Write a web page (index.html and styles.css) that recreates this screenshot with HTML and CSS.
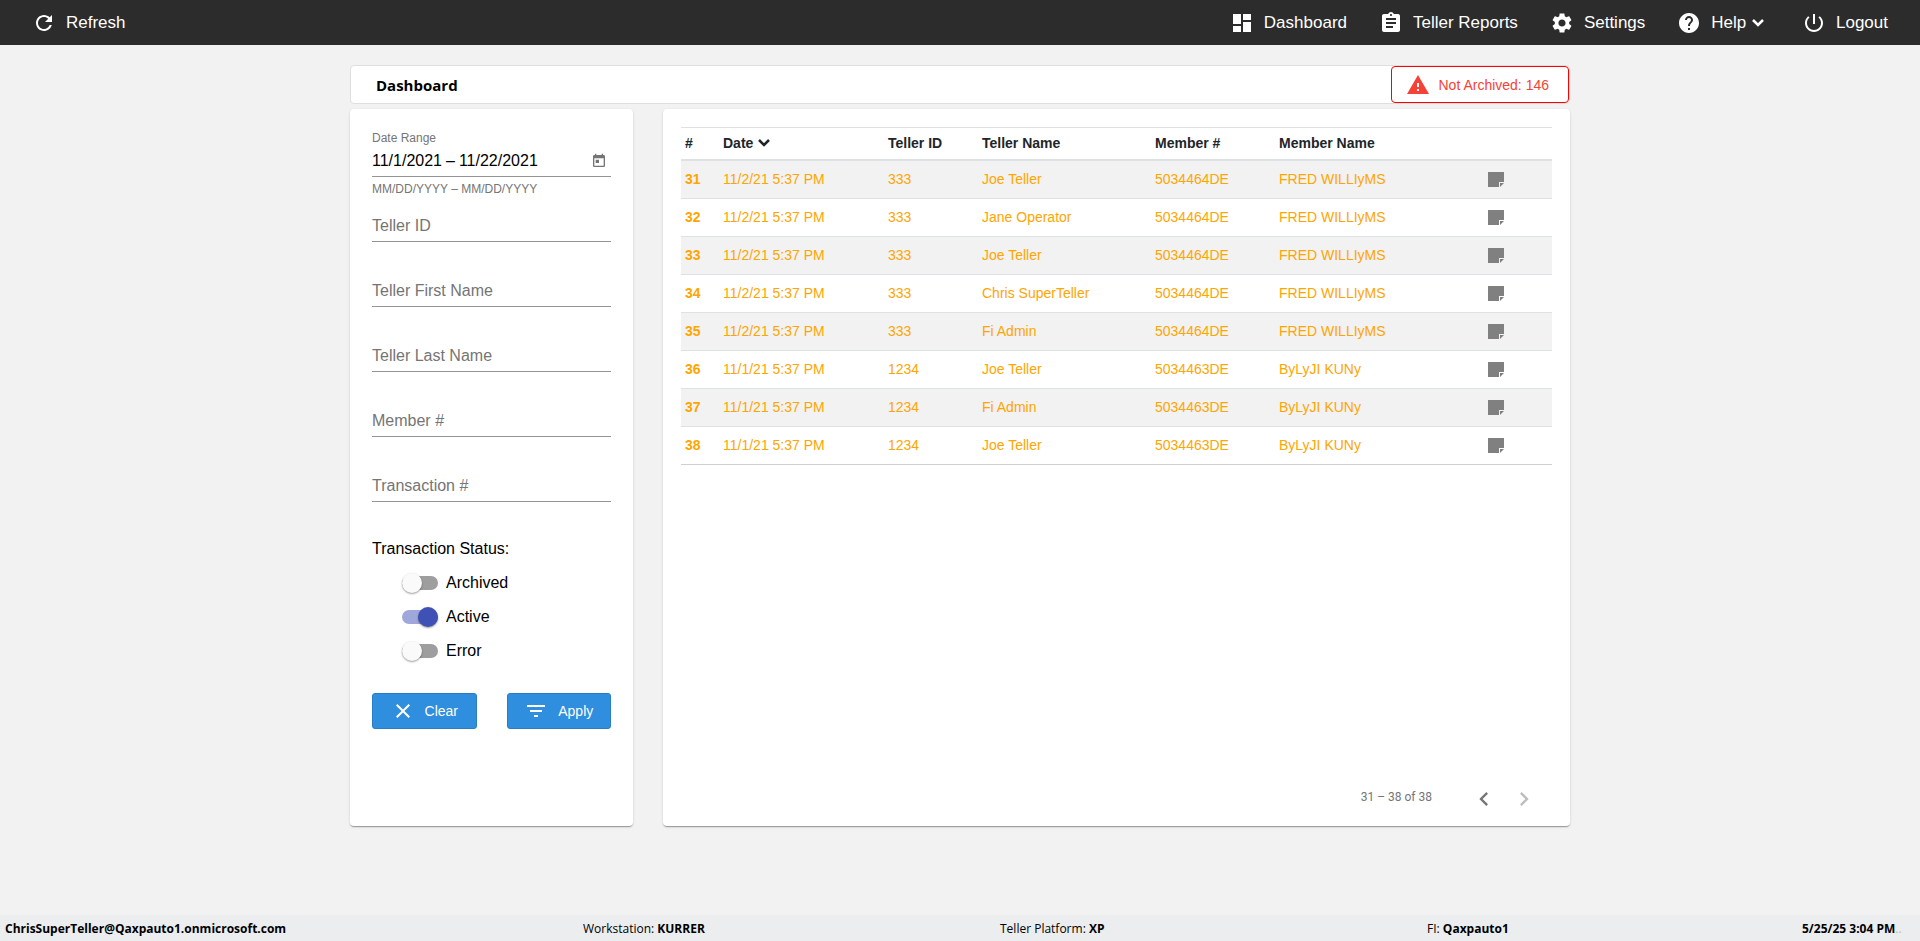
FILE: index.html
```
<!DOCTYPE html>
<html lang="en">
<head>
    <meta charset="UTF-8">
    <meta name="viewport" content="width=device-width, initial-scale=1.0">
    <title>Dashboard</title>
    <link rel="stylesheet" href="styles.css">
</head>
<body>
    <svg class="sprite" aria-hidden="true">
        <symbol id="note" viewBox="0 0 18 18">
            <path d="M1 1h16v10h-5v5H1z"/>
            <path d="M13 12h4l-4 4z"/>
        </symbol>
    </svg>

    <header class="navbar">
        <a href="#" class="nav-item">
            <svg class="icon" viewBox="0 0 24 24"><path d="M17.65 6.35C16.2 4.9 14.21 4 12 4c-4.42 0-7.99 3.58-7.99 8s3.57 8 7.99 8c3.73 0 6.84-2.55 7.73-6h-2.08c-.82 2.33-3.04 4-5.65 4-3.31 0-6-2.69-6-6s2.69-6 6-6c1.66 0 3.14.69 4.22 1.78L13 11h7V4l-2.35 2.35z"/></svg>
            Refresh
        </a>
        <nav class="nav-links">
            <a href="#" class="nav-item">
                <svg class="icon" viewBox="0 0 24 24"><path d="M3 13h8V3H3v10zm0 8h8v-6H3v6zm10 0h8V11h-8v10zm0-18v6h8V3h-8z"/></svg>
                Dashboard
            </a>
            <a href="#" class="nav-item">
                <svg class="icon" viewBox="0 0 24 24"><path d="M19 3h-4.18C14.4 1.84 13.3 1 12 1c-1.3 0-2.4.84-2.82 2H5c-1.1 0-2 .9-2 2v14c0 1.1.9 2 2 2h14c1.1 0 2-.9 2-2V5c0-1.1-.9-2-2-2zm-7 0c.55 0 1 .45 1 1s-.45 1-1 1-1-.45-1-1 .45-1 1-1zm2 14H7v-2h7v2zm3-4H7v-2h10v2zm0-4H7V7h10v2z"/></svg>
                Teller Reports
            </a>
            <a href="#" class="nav-item">
                <svg class="icon" viewBox="0 0 24 24"><path d="M19.14 12.94c.04-.3.06-.61.06-.94 0-.32-.02-.64-.07-.94l2.03-1.58c.18-.14.23-.41.12-.61l-1.92-3.32c-.12-.22-.37-.29-.59-.22l-2.39.96c-.5-.38-1.03-.7-1.62-.94l-.36-2.54c-.04-.24-.24-.41-.48-.41h-3.84c-.24 0-.43.17-.47.41l-.36 2.54c-.59.24-1.13.57-1.62.94l-2.39-.96c-.22-.08-.47 0-.59.22L2.74 8.87c-.12.21-.08.47.12.61l2.03 1.58c-.05.3-.09.63-.09.94s.02.64.07.94l-2.03 1.58c-.18.14-.23.41-.12.61l1.92 3.32c.12.22.37.29.59.22l2.39-.96c.5.38 1.03.7 1.62.94l.36 2.54c.05.24.24.41.48.41h3.84c.24 0 .44-.17.47-.41l.36-2.54c.59-.24 1.13-.56 1.62-.94l2.39.96c.22.08.47 0 .59-.22l1.92-3.32c.12-.22.07-.47-.12-.61l-2.01-1.58zM12 15.6c-1.98 0-3.6-1.62-3.6-3.6s1.62-3.6 3.6-3.6 3.6 1.62 3.6 3.6-1.62 3.6-3.6 3.6z"/></svg>
                Settings
            </a>
            <a href="#" class="nav-item">
                <svg class="icon" viewBox="0 0 24 24"><path d="M12 2C6.48 2 2 6.48 2 12s4.48 10 10 10 10-4.48 10-10S17.52 2 12 2zm1 17h-2v-2h2v2zm2.07-7.75l-.9.92C13.45 12.9 13 13.5 13 15h-2v-.5c0-1.1.45-2.1 1.17-2.83l1.24-1.26c.37-.36.59-.86.59-1.41 0-1.1-.9-2-2-2s-2 .9-2 2H8c0-2.21 1.79-4 4-4s4 1.79 4 4c0 .88-.36 1.68-.93 2.25z"/></svg>
                <span class="nav-menu">Help <svg class="caret" viewBox="0 0 14 10"><path d="M2 2l5 5 5-5"/></svg></span>
            </a>
            <a href="#" class="nav-item">
                <svg class="icon" viewBox="0 0 24 24"><path d="M13 3h-2v10h2V3zm4.83 2.17l-1.42 1.42C17.99 7.86 19 9.81 19 12c0 3.87-3.13 7-7 7s-7-3.13-7-7c0-2.19 1.01-4.14 2.58-5.42L6.17 5.17C4.23 6.82 3 9.26 3 12c0 4.97 4.03 9 9 9s9-4.03 9-9c0-2.74-1.23-5.18-3.17-6.83z"/></svg>
                Logout
            </a>
        </nav>
    </header>

    <main class="page">
        <div class="title-bar">
            <h1>Dashboard</h1>
            <button type="button" class="alert-button">
                <svg class="icon" viewBox="0 0 24 24"><path d="M1 21h22L12 2 1 21zm12-3h-2v-2h2v2zm0-4h-2v-4h2v4z"/></svg>
                Not Archived: 146
            </button>
        </div>

        <div class="content">
            <form class="card filters">
                <div class="date-field">
                    <label for="startDate">Date Range</label>
                    <div class="date-row">
                        <input type="text" id="startDate" class="start-date" value="11/1/2021">
                        <span>–</span>
                        <input type="text" class="end-date" aria-label="End date" value="11/22/2021">
                        <button type="button" class="calendar-button" aria-label="Open calendar">
                            <svg viewBox="0 0 24 24"><path d="M19 3h-1V1h-2v2H8V1H6v2H5c-1.11 0-1.99.9-1.99 2L3 19c0 1.1.89 2 2 2h14c1.1 0 2-.9 2-2V5c0-1.1-.9-2-2-2zm0 16H5V8h14v11zM7 10h5v5H7z"/></svg>
                        </button>
                    </div>
                    <p class="hint">MM/DD/YYYY – MM/DD/YYYY</p>
                </div>
                <div class="field">
                    <label for="tellerId">Teller ID</label>
                    <input type="text" id="tellerId">
                </div>
                <div class="field">
                    <label for="tellerFirstName">Teller First Name</label>
                    <input type="text" id="tellerFirstName">
                </div>
                <div class="field">
                    <label for="tellerLastName">Teller Last Name</label>
                    <input type="text" id="tellerLastName">
                </div>
                <div class="field">
                    <label for="memberNumber">Member #</label>
                    <input type="text" id="memberNumber">
                </div>
                <div class="field">
                    <label for="transactionNumber">Transaction #</label>
                    <input type="text" id="transactionNumber">
                </div>

                <fieldset class="status">
                    <legend>Transaction Status:</legend>
                    <label class="toggle"><input type="checkbox"> Archived</label>
                    <label class="toggle"><input type="checkbox" checked> Active</label>
                    <label class="toggle"><input type="checkbox"> Error</label>
                </fieldset>

                <div class="buttons">
                    <button type="button" class="btn">
                        <svg class="icon" viewBox="0 0 24 24"><path d="M19 6.41L17.59 5 12 10.59 6.41 5 5 6.41 10.59 12 5 17.59 6.41 19 12 13.41 17.59 19 19 17.59 13.41 12z"/></svg>
                        Clear
                    </button>
                    <button type="button" class="btn">
                        <svg class="icon" viewBox="0 0 24 24"><path d="M10 18h4v-2h-4v2zM3 6v2h18V6H3zm3 7h12v-2H6v2z"/></svg>
                        Apply
                    </button>
                </div>
            </form>

            <section class="card results">
                <table class="transactions">
                    <thead>
                        <tr>
                            <th class="col-number">#</th>
                            <th class="col-date">Date <svg class="caret" viewBox="0 0 14 10"><path d="M2 2l5 5 5-5"/></svg></th>
                            <th class="col-teller-id">Teller ID</th>
                            <th class="col-teller-name">Teller Name</th>
                            <th class="col-member">Member #</th>
                            <th>Member Name</th>
                            <th class="col-note"></th>
                        </tr>
                    </thead>
                    <tbody>
                        <tr><th>31</th><td>11/2/21 5:37 PM</td><td>333</td><td>Joe Teller</td><td>5034464DE</td><td>FRED WILLIyMS</td><td><svg class="note"><use href="#note"/></svg></td></tr>
                        <tr><th>32</th><td>11/2/21 5:37 PM</td><td>333</td><td>Jane Operator</td><td>5034464DE</td><td>FRED WILLIyMS</td><td><svg class="note"><use href="#note"/></svg></td></tr>
                        <tr><th>33</th><td>11/2/21 5:37 PM</td><td>333</td><td>Joe Teller</td><td>5034464DE</td><td>FRED WILLIyMS</td><td><svg class="note"><use href="#note"/></svg></td></tr>
                        <tr><th>34</th><td>11/2/21 5:37 PM</td><td>333</td><td>Chris SuperTeller</td><td>5034464DE</td><td>FRED WILLIyMS</td><td><svg class="note"><use href="#note"/></svg></td></tr>
                        <tr><th>35</th><td>11/2/21 5:37 PM</td><td>333</td><td>Fi Admin</td><td>5034464DE</td><td>FRED WILLIyMS</td><td><svg class="note"><use href="#note"/></svg></td></tr>
                        <tr><th>36</th><td>11/1/21 5:37 PM</td><td>1234</td><td>Joe Teller</td><td>5034463DE</td><td>ByLyJI KUNy</td><td><svg class="note"><use href="#note"/></svg></td></tr>
                        <tr><th>37</th><td>11/1/21 5:37 PM</td><td>1234</td><td>Fi Admin</td><td>5034463DE</td><td>ByLyJI KUNy</td><td><svg class="note"><use href="#note"/></svg></td></tr>
                        <tr><th>38</th><td>11/1/21 5:37 PM</td><td>1234</td><td>Joe Teller</td><td>5034463DE</td><td>ByLyJI KUNy</td><td><svg class="note"><use href="#note"/></svg></td></tr>
                    </tbody>
                </table>
                <div class="paginator">
                    <span class="range">31 – 38 of 38</span>
                    <button type="button" class="page-button" aria-label="Previous page">
                        <svg viewBox="0 0 24 24"><path d="M15.41 7.41L14 6l-6 6 6 6 1.41-1.41L10.83 12z"/></svg>
                    </button>
                    <button type="button" class="page-button" aria-label="Next page" disabled>
                        <svg viewBox="0 0 24 24"><path d="M10 6L8.59 7.41 13.17 12l-4.58 4.59L10 18l6-6z"/></svg>
                    </button>
                </div>
            </section>
        </div>
    </main>

    <footer class="footer">
        <div><b>ChrisSuperTeller@Qaxpauto1.onmicrosoft.com</b></div>
        <div>Workstation: <b>KURRER</b></div>
        <div>Teller Platform: <b>XP</b></div>
        <div>FI: <b>Qaxpauto1</b></div>
        <div><b>5/25/25 3:04 PM</b><span class="dots">..</span></div>
    </footer>
</body>
</html>
```
FILE: styles.css
```
* {
    box-sizing: border-box;
}
body {
    font-family: Arial, "Liberation Sans", sans-serif;
    font-size: 16px;
    background-color: #f2f2f2;
    color: #000;
    margin: 0;
    min-height: 100vh;
    display: flex;
    flex-direction: column;
}
button, input {
    font: inherit;
}
.sprite {
    display: none;
}
.icon {
    width: 24px;
    height: 24px;
    fill: currentColor;
    flex: none;
}
.caret {
    width: 14px;
    height: 10px;
    fill: none;
    stroke: currentColor;
    stroke-width: 2.5;
}

/* top bar */
.navbar {
    background-color: #2c2c2c;
    height: 45px;
    padding: 0 32px;
    display: flex;
    justify-content: space-between;
    align-items: center;
}
.nav-links {
    display: flex;
    gap: 32px;
}
.nav-item {
    display: flex;
    align-items: center;
    gap: 10px;
    color: #fff;
    font-size: 17px;
    line-height: 24px;
    text-decoration: none;
}
.nav-menu {
    padding-right: 5px;
}

/* page */
.page {
    flex: 1;
    width: 100%;
    max-width: 1220px;
    margin: 0 auto;
    padding: 20px 0 89px;
    display: flex;
    flex-direction: column;
}
.title-bar {
    background-color: #fff;
    border: 1px solid #dedede;
    border-radius: 4px;
    padding-left: 25px;
    margin-bottom: 5px;
    display: flex;
    justify-content: space-between;
    align-items: center;
}
.title-bar h1 {
    font-family: "Segoe UI", "Open Sans", sans-serif;
    font-size: 15px;
    margin: 0;
}
.alert-button {
    display: flex;
    align-items: center;
    gap: 8px;
    height: 37px;
    padding: 0 19px 0 14px;
    background-color: #fff;
    border: 1px solid #f00;
    border-radius: 4px;
    color: #f44336;
    font-size: 14px;
}
.content {
    flex: 1;
    display: grid;
    grid-template-columns: 283px 1fr;
    gap: 30px;
}
.card {
    background-color: #fff;
    border-radius: 4px;
    box-shadow: 0 2px 1px -1px rgba(0, 0, 0, 0.2), 0 1px 1px rgba(0, 0, 0, 0.14), 0 1px 3px rgba(0, 0, 0, 0.12);
}

/* filters */
.filters {
    padding: 22px;
}
.filters input[type=text] {
    border: none;
    outline: none;
    background: transparent;
    padding: 0;
    min-width: 0;
}
.date-field {
    height: 80px;
}
.date-field label {
    display: block;
    font-size: 12px;
    line-height: 14px;
    color: #757575;
}
.date-row {
    display: flex;
    align-items: center;
    gap: 4px;
    height: 32px;
    padding-right: 4px;
    border-bottom: 1px solid #949494;
}
.start-date {
    width: 70px;
}
.end-date {
    flex: 1;
}
.calendar-button {
    width: 16px;
    height: 16px;
    padding: 0;
    border: none;
    background: none;
}
.calendar-button svg {
    display: block;
    fill: #757575;
}
.hint {
    margin: 5px 0 0;
    font-size: 12px;
    line-height: 14px;
    color: #757575;
}
.field {
    display: grid;
    height: 31px;
    margin-bottom: 34px;
    border-bottom: 1px solid #949494;
}
.field label,
.field input {
    grid-area: 1 / 1;
    line-height: 30px;
}
.field label {
    color: #757575;
}
.status {
    border: none;
    margin: 0;
    padding: 0;
}
.status legend {
    padding: 3px 0 7px;
    line-height: 20px;
}
.toggle {
    display: flex;
    align-items: center;
    gap: 8px;
    height: 34px;
    margin-left: 30px;
}
.toggle input {
    appearance: none;
    display: flex;
    align-items: center;
    width: 36px;
    height: 14px;
    margin: 0;
    border-radius: 8px;
    background-color: #9e9e9e;
}
.toggle input::before {
    content: "";
    width: 20px;
    height: 20px;
    flex: none;
    border-radius: 50%;
    background-color: #fafafa;
    box-shadow: 0 1px 2px rgba(0, 0, 0, 0.4);
}
.toggle input:checked {
    justify-content: flex-end;
    background-color: #9fa8da;
}
.toggle input:checked::before {
    background-color: #3f51b5;
}
.buttons {
    display: flex;
    justify-content: space-between;
    gap: 30px;
    margin-top: 25px;
}
.btn {
    flex: 1;
    display: flex;
    justify-content: center;
    align-items: center;
    gap: 10px;
    height: 36px;
    padding: 0;
    background-color: #2f8edd;
    border: 1px solid #2a7dc2;
    border-radius: 3px;
    color: #fff;
    font-size: 14px;
}

/* results */
.results {
    display: flex;
    flex-direction: column;
    padding: 18px 18px 7px;
}
.transactions {
    width: 100%;
    table-layout: fixed;
    border-spacing: 0;
    font-size: 14px;
    line-height: 21px;
}
.transactions th,
.transactions td {
    height: 38px;
    padding: 0 4px;
    text-align: left;
    border-bottom: 1px solid #dee2e6;
}
.transactions thead th {
    height: 34px;
    color: #212529;
    border-top: 1px solid #dee2e6;
    border-bottom-width: 2px;
}
.transactions tbody tr {
    color: orange;
}
.transactions tbody tr:nth-child(odd) {
    background-color: #f2f2f2;
}
.transactions tbody tr:last-child > * {
    border-bottom-color: #d0d0d0;
}
.col-number {
    width: 38px;
}
.col-date {
    width: 165px;
}
.col-teller-id {
    width: 94px;
}
.col-teller-name {
    width: 173px;
}
.col-member {
    width: 124px;
}
.col-note {
    width: 69px;
}
.note {
    display: block;
    width: 18px;
    height: 18px;
    fill: #808080;
}
.paginator {
    display: flex;
    justify-content: flex-end;
    align-items: center;
    margin-top: auto;
    padding-right: 8px;
    color: #757575;
}
.range {
    font-family: Roboto, sans-serif;
    font-size: 12px;
    padding-bottom: 4px;
    margin-right: 32px;
}
.page-button {
    display: flex;
    justify-content: center;
    align-items: center;
    width: 40px;
    height: 40px;
    padding: 0;
    border: none;
    background: none;
}
.page-button svg {
    width: 28px;
    height: 28px;
    fill: #757575;
}
.page-button:disabled svg {
    fill: #bdbdbd;
}

/* status bar */
.footer {
    display: grid;
    grid-template-columns: 578fr 417fr 427fr 375fr 113fr;
    height: 26px;
    padding: 1px 5px 0;
    background-color: #ebedef;
    font-family: "Segoe UI", "Open Sans", sans-serif;
    font-size: 12px;
    line-height: 25px;
    white-space: nowrap;
}
.dots {
    color: #c0b8a8;
}
```
